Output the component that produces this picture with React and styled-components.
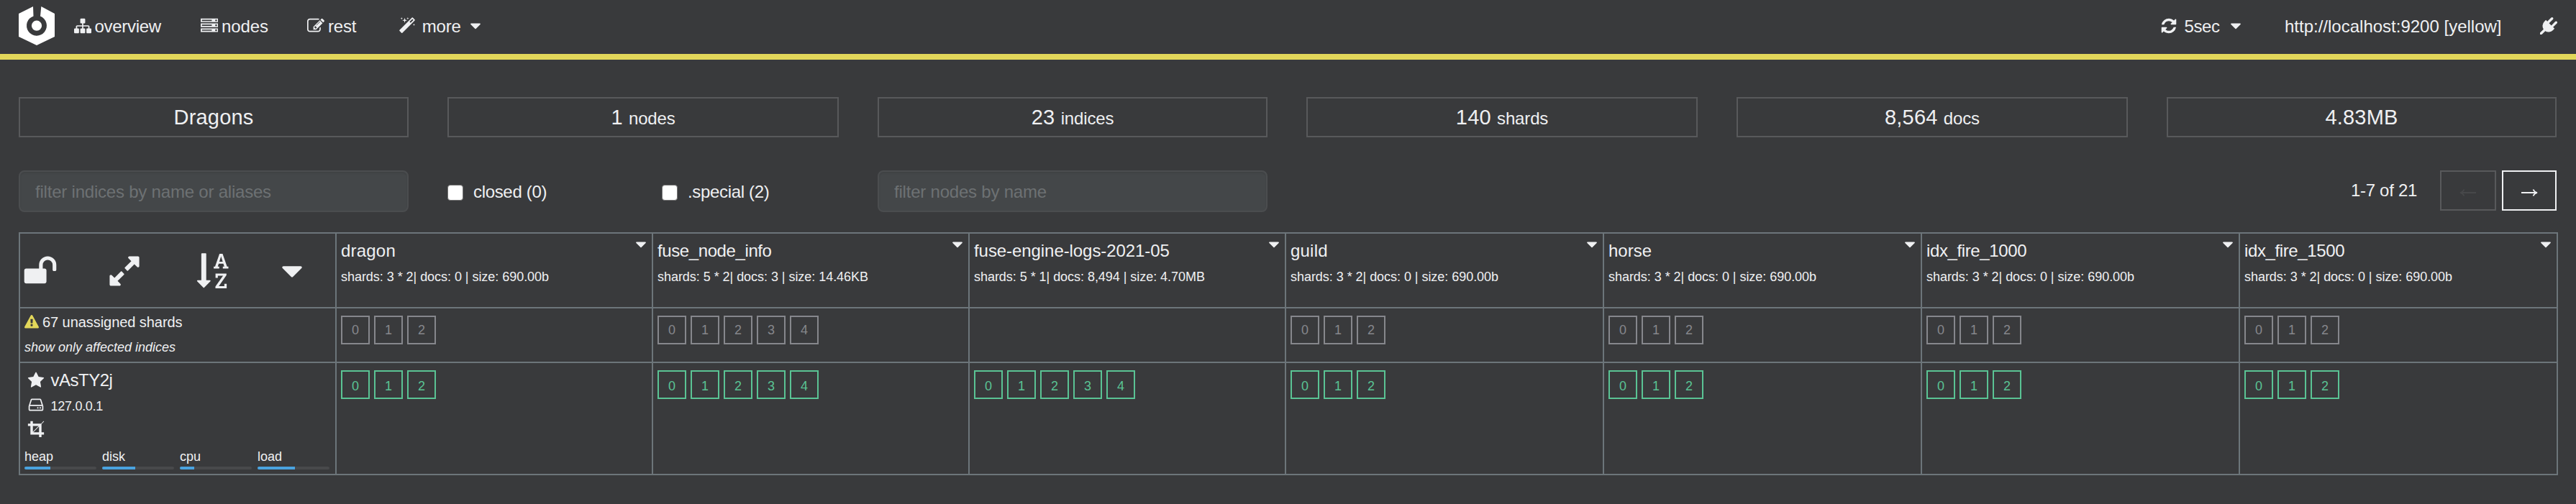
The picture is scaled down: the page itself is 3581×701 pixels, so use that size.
import React from 'react';
import styled, { createGlobalStyle } from 'styled-components';

const Global = createGlobalStyle`
  * { box-sizing: border-box; }
  body { margin: 0; background: #393a3c; color: #eff0f2; font-family: "Liberation Sans", Arial, Helvetica, sans-serif; font-size: 24px; }
`;

const paths = {
  sitemap: 'M1792 1248v320q0 40-28 68t-68 28h-320q-40 0-68-28t-28-68v-320q0-40 28-68t68-28h96v-192h-512v192h96q40 0 68 28t28 68v320q0 40-28 68t-68 28h-320q-40 0-68-28t-28-68v-320q0-40 28-68t68-28h96v-192h-512v192h96q40 0 68 28t28 68v320q0 40-28 68t-68 28h-320q-40 0-68-28t-28-68v-320q0-40 28-68t68-28h96v-192q0-52 38-90t90-38h512v-192h-96q-40 0-68-28t-28-68v-320q0-40 28-68t68-28h320q40 0 68 28t28 68v320q0 40-28 68t-68 28h-96v192h512q52 0 90 38t38 90v192h96q40 0 68 28t28 68z',
  server: 'M128 1408h1024v-128h-1024v128zm0-512h1024v-128h-1024v128zm1568 448q0-40-28-68t-68-28-68 28-28 68 28 68 68 28 68-28 28-68zm-1568-960h1024v-128h-1024v128zm1568 448q0-40-28-68t-68-28-68 28-28 68 28 68 68 28 68-28 28-68zm0-512q0-40-28-68t-68-28-68 28-28 68 28 68 68 28 68-28 28-68zm96 832v384h-1792v-384h1792zm0-512v384h-1792v-384h1792zm0-512v384h-1792v-384h1792z',
  edit: 'M888 1184l116-116-152-152-116 116v56h96v96h56zm440-720q-16-16-33 1l-350 350q-17 17-1 33t33-1l350-350q17-17 1-33zm80 594v190q0 119-84.5 203.5t-203.5 84.5h-832q-119 0-203.5-84.5t-84.5-203.5v-832q0-119 84.5-203.5t203.5-84.5h832q63 0 117 25 15 7 18 23 3 17-9 29l-49 49q-14 14-32 8-23-6-45-6h-832q-66 0-113 47t-47 113v832q0 66 47 113t113 47h832q66 0 113-47t47-113v-126q0-13 9-22l64-64q15-15 35-7t20 29zm-96-738l288 288-672 672h-288v-288zm444 132l-92 92-288-288 92-92q28-28 68-28t68 28l152 152q28 28 28 68t-28 68z',
  magic: 'M1254 581l293-293-107-107-293 293zm447-293q0 27-18 45l-1286 1286q-18 18-45 18t-45-18l-198-198q-18-18-18-45t18-45l1286-1286q18-18 45-18t45 18l198 198q18 18 18 45zm-1351-190l98 30-98 30-30 98-30-98-98-30 98-30 30-98zm350 162l196 60-196 60-60 196-60-196-196-60 196-60 60-196zm930 478l98 30-98 30-30 98-30-98-98-30 98-30 30-98zm-640-640l98 30-98 30-30 98-30-98-98-30 98-30 30-98z',
  refresh: 'M1639 1056q0 5-1 7-64 268-268 434.5t-478 166.5q-146 0-282.5-55t-243.5-157l-129 129q-19 19-45 19t-45-19-19-45v-448q0-26 19-45t45-19h448q26 0 45 19t19 45-19 45l-137 137q71 66 161 102t187 36q134 0 250-65t186-179q11-17 53-117 8-23 30-23h192q13 0 22.5 9.5t9.5 22.5zm25-800v448q0 26-19 45t-45 19h-448q-26 0-45-19t-19-45 19-45l138-138q-148-137-349-137-134 0-250 65t-186 179q-11 17-53 117-8 23-30 23h-199q-13 0-22.5-9.5t-9.5-22.5v-7q65-268 270-434.5t480-166.5q146 0 284 55.5t245 156.5l130-129q19-19 45-19t45 19 19 45z',
  plug: 'M1755 453q37 38 37 90.5t-37 90.5l-401 400 150 150-160 160q-163 163-389.5 186.5t-411.5-100.5l-362 362h-181v-181l362-362q-124-185-100.5-411.5t186.5-389.5l160-160 150 150 400-401q38-37 91-37t90 37 37 90.5-37 90.5l-400 401 234 234 401-400q38-37 91-37t90 37z',
  caret: 'M1408 704q0 26-19 45l-448 448q-19 19-45 19t-45-19l-448-448q-19-19-19-45t19-45 45-19h896q26 0 45 19t19 45z',
  unlock: 'M1728 576v256q0 26-19 45t-45 19h-64q-26 0-45-19t-19-45v-256q0-106-75-181t-181-75-181 75-75 181v192h96q40 0 68 28t28 68v576q0 40-28 68t-68 28h-960q-40 0-68-28t-28-68v-576q0-40 28-68t68-28h672v-192q0-185 131.5-316.5t316.5-131.5 316.5 131.5 131.5 316.5z',
  expand: 'M883 1056q0 13-10 23l-332 332 144 144q19 19 19 45t-19 45-45 19h-448q-26 0-45-19t-19-45v-448q0-26 19-45t45-19 45 19l144 144 332-332q10-10 23-10t23 10l114 114q10 10 10 23zm781-864v448q0 26-19 45t-45 19-45-19l-144-144-332 332q-10 10-23 10t-23-10l-114-114q-10-10-10-23t10-23l332-332-144-144q-19-19-19-45t19-45 45-19h448q26 0 45 19t19 45z',
  sortAlpha: 'M1191 408h177l-72-218-12-47q-2-16-2-20h-4l-3 20q0 1-3.5 18t-7.5 29zm-455 1000q0 12-10 24l-319 319q-10 9-23 9-12 0-23-9l-320-320q-15-16-7-35 8-20 30-20h192v-1376q0-14 9-23t23-9h192q14 0 23 9t9 23v1376h192q14 0 23 9t9 23zm836 151v233h-584v-90l369-529q12-18 21-27l11-9v-3q-2 0-6.5.5t-7.5.5q-12 3-30 3h-232v115h-120v-229h567v89l-369 530q-6 8-21 26l-11 11v2l14-2q9-2 30-2h248v-119h121zm89-898v106h-288v-106h75l-47-144h-243l-47 144h75v106h-287v-106h70l230-662h162l230 662h70z',
  star: 'M1728 647q0 22-26 48l-363 354 86 500q1 7 1 20 0 21-10.5 35.5t-30.5 14.5q-19 0-40-12l-449-236-449 236q-22 12-40 12-21 0-31.5-14.5t-10.5-35.5q0-6 2-20l86-500-364-354q-25-27-25-48 0-37 56-46l502-73 225-455q19-41 49-41t49 41l225 455 502 73q56 9 56 46z',
  disk: 'M1168 1216q0 33-23.5 56.5t-56.5 23.5-56.5-23.5-23.5-56.5 23.5-56.5 56.5-23.5 56.5 23.5 23.5 56.5zm256 0q0 33-23.5 56.5t-56.5 23.5-56.5-23.5-23.5-56.5 23.5-56.5 56.5-23.5 56.5 23.5 23.5 56.5zm112 160v-320q0-13-9.5-22.5t-22.5-9.5h-1216q-13 0-22.5 9.5t-9.5 22.5v320q0 13 9.5 22.5t22.5 9.5h1216q13 0 22.5-9.5t9.5-22.5zm-1230-480h1180l-157-482q-4-13-16-21.5t-26-8.5h-782q-14 0-26 8.5t-16 21.5zm1358 160v320q0 66-47 113t-113 47h-1216q-66 0-113-47t-47-113v-320q0-25 16-75l197-606q17-53 63-86t101-33h782q55 0 101 33t63 86l197 606q16 50 16 75z',
  crop: 'M621 1280h595v-595zm-45-45l595-595h-595v595zm1152 77v192q0 14-9 23t-23 9h-224v224q0 14-9 23t-23 9h-192q-14 0-23-9t-9-23v-224h-864q-14 0-23-9t-9-23v-864h-224q-14 0-23-9t-9-23v-192q0-14 9-23t23-9h224v-224q0-14 9-23t23-9h192q14 0 23 9t9 23v224h851l246-247q10-9 23-9t23 9q9 10 9 23t-9 23l-247 246v851h224q14 0 23 9t9 23z',
  warning: 'M1024 1375v-190q0-14-9.5-23.5t-22.5-9.5h-192q-13 0-22.5 9.5t-9.5 23.5v190q0 14 9.5 23.5t22.5 9.5h192q13 0 22.5-9.5t9.5-23.5zm-2-374l18-459q0-12-10-19-13-11-24-11h-220q-11 0-24 11-10 7-10 21l17 457q0 10 10 16.5t24 6.5h185q14 0 23.5-6.5t10.5-16.5zm-14-934l768 1408q35 63-2 126-17 29-46.5 46t-63.5 17h-1536q-34 0-63.5-17t-46.5-46q-37-63-2-126l768-1408q17-31 47-49t65-18 65 18 47 49z',
};

const Glyph = styled.svg`
  width: ${(p) => p.$size || 24}px;
  height: ${(p) => p.$size || 24}px;
  flex: none;
  fill: ${(p) => p.$color || 'currentColor'};
  overflow: visible;
`;
const Icon = ({ name, size, color }) => (
  <Glyph viewBox="0 0 1792 1792" $size={size} $color={color} aria-hidden="true">
    <path fillRule="evenodd" d={paths[name]} />
  </Glyph>
);

const Navbar = styled.header`
  display: flex;
  height: 83px;
  padding: 0 26px;
  border-bottom: 8px solid #e2d75a;
`;
const Brand = styled.div`
  width: 76.5px;
  padding-top: 9px;
`;
const NavLink = styled.a`
  display: flex;
  align-items: center;
  height: 74px;
  width: ${(p) => p.$width}px;
  gap: ${(p) => p.$gap || 5}px;
  letter-spacing: ${(p) => p.$track ?? -0.2}px;
  white-space: pre;
  ${Glyph} { margin-top: -1.2px; }
`;
const Spacer = styled.div`
  flex: 1;
`;
const NavText = styled.span`
  line-height: 28px;
`;

const Content = styled.main`
  padding: 52px 25px 0 26px;
`;
const Columns = styled.div`
  display: grid;
  grid-template-columns: 542px 544px 542px 544px 544px 542px;
  column-gap: 54px;
`;
const Stat = styled.div`
  height: 56px;
  border: 2px solid #58595b;
  text-align: center;
  font-size: 29px;
  line-height: 52px;
  letter-spacing: 0.2px;
  small { font-size: 24px; letter-spacing: -0.15px; }
`;
const Filters = styled(Columns)`
  margin-top: 46px;
  height: 58px;
`;
const FilterInput = styled.input`
  width: 100%;
  height: 58px;
  border: 2px solid #4b4d4f;
  border-radius: 8px;
  padding: 1px 21px 0;
  background: #444749;
  box-shadow: inset 0 2px 2px rgba(0, 0, 0, 0.075);
  font: 24px "Liberation Sans", Arial, sans-serif;
  letter-spacing: -0.21px;
  color: #eff0f2;
  outline: none;
  &::placeholder { color: #6d7173; opacity: 1; }
`;
const Checks = styled.div`
  display: grid;
  grid-template-columns: 298px 1fr;
`;
const CheckLabel = styled.label`
  display: flex;
  align-items: center;
  height: 60px;
  gap: 14px;
  letter-spacing: -0.33px;
`;
const CheckBox = styled.input`
  appearance: none;
  width: 22px;
  height: 22px;
  margin: 2px 0 0;
  background: #fff;
  border: 1.5px solid #767676;
  border-radius: 4px;
`;
const Pager = styled.div`
  grid-column: 6;
  display: flex;
  justify-content: flex-end;
  line-height: 56px;
  letter-spacing: -0.3px;
`;
const PageButton = styled.button`
  display: flex;
  align-items: center;
  justify-content: center;
  width: ${(p) => p.$width}px;
  height: 56px;
  margin-left: ${(p) => p.$offset}px;
  padding: 4px 0 0;
  background: none;
  border: 2px solid ${(p) => (p.disabled ? '#58595b' : '#eff0f2')};
  color: ${(p) => (p.disabled ? '#47484a' : '#eff0f2')};
`;
const ArrowSvg = styled.svg`
  width: 24px;
  height: 14px;
  fill: none;
  stroke: currentColor;
  stroke-width: 1.8;
  transform: ${(p) => (p.$left ? 'scaleX(-1)' : 'none')};
`;
const Arrow = ({ left }) => (
  <ArrowSvg viewBox="0 0 24 14" $left={left}>
    <path d="M1 8H22M17.5 3.5Q19 7 23 8Q19 9 17.5 12.5" />
  </ArrowSvg>
);

const Shards = styled.section`
  display: grid;
  grid-template-columns: repeat(4, 440px) repeat(4, 442px);
  grid-template-rows: 104px 76px 156px;
  width: 3530px;
  margin-top: 28px;
  border: solid #6c757a;
  border-width: 0 2px 2px 0;
`;
const Cell = styled.div`
  display: flex;
  flex-direction: column;
  border: solid #6c757a;
  border-width: 2px 0 0 2px;
  padding: 0 6px;
`;
const ToolCell = styled(Cell)`
  flex-direction: row;
  padding: 27.5px 0 0 4.3px;
`;
const Tool = styled.span`
  display: flex;
  margin-right: ${(p) => p.$after}px;
`;
const IndexTop = styled.div`
  display: flex;
  justify-content: space-between;
  margin-top: 10px;
`;
const IndexName = styled.span`
  line-height: 28px;
  letter-spacing: ${(p) => p.$track}px;
`;
const IndexCaret = styled.span`
  display: flex;
  margin: -7px -3px 0 0;
`;
const IndexInfo = styled.span`
  margin-top: 11px;
  font-size: 18px;
  line-height: 22px;
  letter-spacing: -0.04px;
  white-space: pre;
`;
const ShardList = styled.div`
  display: flex;
  gap: 6px;
  margin-top: 10px;
`;
const Shard = styled.span`
  width: 40px;
  height: 40px;
  border: 2px solid;
  color: ${(p) => (p.$assigned ? '#5ac394' : '#86878c')};
  font-size: 18px;
  line-height: ${(p) => (p.$assigned ? 40 : 36)}px;
  text-align: center;
`;
const Unassigned = styled.div`
  display: flex;
  align-items: center;
  gap: 5px;
  margin-top: 7px;
  font-size: 20px;
  line-height: 24px;
  letter-spacing: -0.06px;
`;
const Affected = styled.em`
  margin-top: 12px;
  font-size: 18px;
  line-height: 22px;
`;
const NodeLine = styled.div`
  display: flex;
  align-items: center;
  gap: 9px;
  margin-top: ${(p) => p.$top}px;
  margin-left: 3.5px;
  height: 24px;
`;
const NodeName = styled.span`
  letter-spacing: -0.5px;
`;
const NodeHost = styled.span`
  padding-top: 5px;
  font-size: 18px;
  letter-spacing: -0.28px;
`;
const Meters = styled.div`
  display: grid;
  grid-template-columns: repeat(4, 100px);
  gap: 8px;
  margin-top: 17px;
  font-size: 18px;
  line-height: 20px;
`;
const Track = styled.div`
  height: 4px;
  margin-top: 4px;
  border-radius: 2px;
  background: #48494b;
  overflow: hidden;
`;
const Fill = styled.div`
  height: 4px;
  background: #4aa3df;
`;

const indices = [
  { name: 'dragon', track: 0.2, info: 'shards: 3 * 2| docs: 0 | size: 690.00b', lost: 3, held: 3 },
  { name: 'fuse_node_info', track: -0.4, info: 'shards: 5 * 2| docs: 3 | size: 14.46KB', lost: 5, held: 5 },
  { name: 'fuse-engine-logs-2021-05', track: -0.07, info: 'shards: 5 * 1| docs: 8,494 | size: 4.70MB', lost: 0, held: 5 },
  { name: 'guild', track: 0.2, info: 'shards: 3 * 2| docs: 0 | size: 690.00b', lost: 3, held: 3 },
  { name: 'horse', track: 0, info: 'shards: 3 * 2| docs: 0 | size: 690.00b', lost: 3, held: 3 },
  { name: 'idx_fire_1000', track: -0.38, info: 'shards: 3 * 2| docs: 0 | size: 690.00b', lost: 3, held: 3 },
  { name: 'idx_fire_1500', track: -0.38, info: 'shards: 3 * 2| docs: 0 | size: 690.00b', lost: 3, held: 3 },
];
const meters = [['heap', 36], ['disk', 46], ['cpu', 20], ['load', 52]];

const ShardRow = ({ count, assigned }) => (
  <ShardList>
    {Array.from({ length: count }, (_, i) => (
      <Shard key={i} $assigned={assigned}>{i}</Shard>
    ))}
  </ShardList>
);

export default function App() {
  return (
    <>
      <Global />
      <Navbar>
        <Brand>
          <svg width="50" height="54" viewBox="0 0 50 54" fill="#fff">
            <path d="M20 0L0 10V42L25 54L50 42V10L31.3 0L30 13.6A14 14 0 1 1 20.5 13.4Z" />
            <circle cx="25" cy="26.7" r="7.1" />
          </svg>
        </Brand>
        <NavLink $width={176.5} $track={-0.3}><Icon name="sitemap" /><NavText>overview</NavText></NavLink>
        <NavLink $width={148} $track={-0.1}><Icon name="server" /><NavText>nodes</NavText></NavLink>
        <NavLink $width={127}><Icon name="edit" /><NavText>rest</NavText></NavLink>
        <NavLink $gap={8.8}><Icon name="magic" /><NavText>more</NavText><Icon name="caret" /></NavLink>
        <Spacer />
        <NavLink $width={173.5} $gap={10} $track={-0.4}><Icon name="refresh" /><NavText>5sec</NavText><Icon name="caret" /></NavLink>
        <NavLink $width={355} $track={0}><NavText>http://localhost:9200 [yellow]</NavText></NavLink>
        <NavLink><Icon name="plug" /></NavLink>
      </Navbar>
      <Content>
        <Columns>
          <Stat>Dragons</Stat>
          <Stat>1 <small>nodes</small></Stat>
          <Stat>23 <small>indices</small></Stat>
          <Stat>140 <small>shards</small></Stat>
          <Stat>8,564 <small>docs</small></Stat>
          <Stat>4.83MB</Stat>
        </Columns>
        <Filters>
          <FilterInput placeholder="filter indices by name or aliases" />
          <Checks>
            <CheckLabel><CheckBox type="checkbox" />closed (0)</CheckLabel>
            <CheckLabel><CheckBox type="checkbox" />.special (2)</CheckLabel>
          </Checks>
          <FilterInput placeholder="filter nodes by name" />
          <Pager>
            1-7 of 21
            <PageButton disabled $width={78} $offset={32}><Arrow left /></PageButton>
            <PageButton $width={76} $offset={8}><Arrow /></PageButton>
          </Pager>
        </Filters>
        <Shards>
          <ToolCell>
            <Tool $after={69}><Icon name="unlock" size={48} /></Tool>
            <Tool $after={75.5}><Icon name="expand" size={48} /></Tool>
            <Tool $after={61}><Icon name="sortAlpha" size={48} /></Tool>
            <Tool><Icon name="caret" size={48} /></Tool>
          </ToolCell>
          {indices.map((x) => (
            <Cell key={x.name}>
              <IndexTop>
                <IndexName $track={x.track}>{x.name}</IndexName>
                <IndexCaret><Icon name="caret" /></IndexCaret>
              </IndexTop>
              <IndexInfo>{x.info}</IndexInfo>
            </Cell>
          ))}
          <Cell>
            <Unassigned><Icon name="warning" size={20} color="#e2d75a" />67 unassigned shards</Unassigned>
            <Affected>show only affected indices</Affected>
          </Cell>
          {indices.map((x) => (
            <Cell key={x.name}><ShardRow count={x.lost} /></Cell>
          ))}
          <Cell>
            <NodeLine $top={12}><Icon name="star" /><NodeName>vAsTY2j</NodeName></NodeLine>
            <NodeLine $top={9.5}><Icon name="disk" /><NodeHost>127.0.0.1</NodeHost></NodeLine>
            <NodeLine $top={9.5}><Icon name="crop" /></NodeLine>
            <Meters>
              {meters.map(([label, value]) => (
                <div key={label}>
                  {label}
                  <Track><Fill style={{ width: `${value}%` }} /></Track>
                </div>
              ))}
            </Meters>
          </Cell>
          {indices.map((x) => (
            <Cell key={x.name}><ShardRow count={x.held} assigned /></Cell>
          ))}
        </Shards>
      </Content>
    </>
  );
}
